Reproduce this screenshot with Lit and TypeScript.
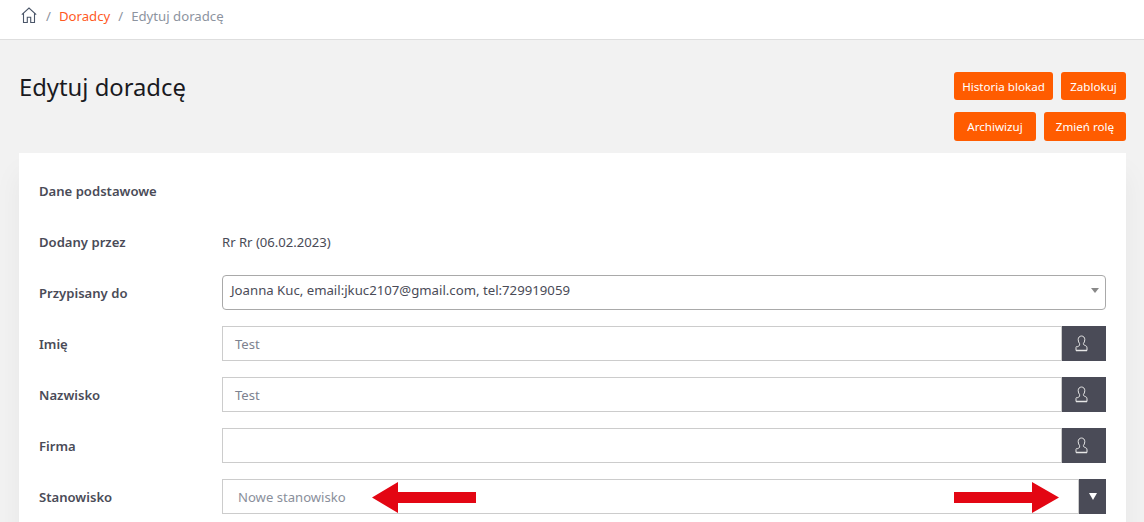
import { LitElement, html, css, svg } from "lit";
import { customElement } from "lit/decorators.js";

const person = svg`<svg class="person" width="13" height="17" viewBox="0 0 13 17" fill="none" stroke="currentColor" stroke-width="1"><path d="M6.500 1c-2 0-3.300 1.500-3.300 3.700 0 1.700.7 3 1.400 3.900v1.300c0 .6-.4 1-1.100 1.300l-1.300.6C1.300 11.200 1 11.800 1 12.800v2.700h11v-2.700c0-1-.3-1.600-1.200-2l-1.300-.6c-.7-.3-1.100-.7-1.100-1.300V8.600c.7-.9 1.400-2.200 1.400-3.900C9.800 2.500 8.500 1 6.500 1z"/><path d="M1 15.500h11" stroke-width="1.500"/></svg>`;

@customElement("app-root")
export class AppRoot extends LitElement {
  static styles = css`
    :host { display: block; height: 522px; overflow: hidden; background: #f2f2f2; font-family: "Noto Sans", "Open Sans", sans-serif; font-size: 13.1px; color: #4a4b57; }
    .crumbs { background: #fff; border-bottom: 1px solid #dedede; display: flex; align-items: center; padding: 0 21px 8px; height: 31px; font-size: 13.2px; color: #8d94a0; }
    .crumbs svg { display: block; color: #4a5568; }
    .sep { margin: 0 8px 0 9px; color: #8d94a0; }
    .crumbs .link { color: #ff5a1f; margin-right: -1px; }
    .head { display: flex; justify-content: space-between; padding: 32px 18px 12px 19px; }
    h1 { margin: 0; font-size: 23.8px; line-height: 30px; font-weight: 400; color: #1a1a1f; }
    .actions { display: flex; flex-direction: column; align-items: flex-end; gap: 12px; }
    .line { display: flex; gap: 8px; }
    .btn { background: #ff5c00; color: #fff; border-radius: 3px; height: 28px; display: flex; align-items: center; justify-content: center; font-size: 11.6px; box-sizing: border-box; }
    .line + .line .btn { height: 29px; }
    .card { position: relative; margin: 0 18px 0 19px; background: #fff; padding: 26px 20px 0; box-shadow: 0 20px 27px rgba(0,0,0,.05); height: 400px; box-sizing: border-box; }
    .row { display: flex; align-items: center; }
    .lab { width: 183px; flex: none; font-weight: 600; }
    .title { height: 24px; margin-bottom: 27px; }
    .info { height: 24px; margin-bottom: 21px; }
    .field { height: 35px; margin-bottom: 16px; }
    .control { flex: 1; height: 35px; box-sizing: border-box; border: 1px solid #ccc; display: flex; align-items: center; padding: 0 12px; color: #7d8290; }
    .select { border-color: #a9a9a9; border-radius: 4px; padding: 0 8px 6px; font-size: 13.2px; color: #4a4b57; justify-content: space-between; }
    .caret { width: 0; height: 0; border-left: 4px solid transparent; border-right: 4px solid transparent; border-top: 5px solid #888; margin: 2px -2px 0 0; }
    .addon { flex: none; width: 44px; height: 35px; box-sizing: border-box; padding-right: 6px; background: #4a4b57; color: #e6e6e6; display: flex; align-items: center; justify-content: center; }
    .combo { padding-left: 15px; color: #8a8f9b; }
    .drop { width: 27px; padding-right: 0; }
    .drop i { width: 0; height: 0; border-left: 4.5px solid transparent; border-right: 4.5px solid transparent; border-top: 7px solid #fff; }
    .arrow { position: absolute; top: 329px; display: block; }
    .a1 { left: 353px; }
    .a2 { left: 935px; }
  `;

  render() {
    return html`
      <nav class="crumbs">
        <svg width="16" height="17" viewBox="0 0 16 17" fill="none" stroke="currentColor" stroke-width="1.1"><path d="M.8 7.600 8 1l7.200 6.600M2.500 6.200V15.500h3.800v-5.300h3.400v5.300h3.800V6.200"/></svg>
        <span class="sep">/</span><span class="link">Doradcy</span><span class="sep">/</span><span>Edytuj doradcę</span>
      </nav>
      <div class="head">
        <h1>Edytuj doradcę</h1>
        <div class="actions">
          <div class="line">
            <div class="btn" style="width:99px">Historia blokad</div>
            <div class="btn" style="width:65px">Zablokuj</div>
          </div>
          <div class="line">
            <div class="btn" style="width:82px">Archiwizuj</div>
            <div class="btn" style="width:82px">Zmień rolę</div>
          </div>
        </div>
      </div>
      <section class="card">
        <div class="row title"><div class="lab">Dane podstawowe</div></div>
        <div class="row info"><div class="lab">Dodany przez</div><div>Rr Rr (06.02.2023)</div></div>
        <div class="row field"><div class="lab">Przypisany do</div>
          <div class="control select"><span>Joanna Kuc, email:jkuc2107@gmail.com, tel:729919059</span><span class="caret"></span></div></div>
        ${["Imię|Test", "Nazwisko|Test", "Firma|"].map((s) => { const [l, v] = s.split("|"); return html`
          <div class="row field"><div class="lab">${l}</div><div class="control">${v}</div><div class="addon">${person}</div></div>`; })}
        <div class="row field"><div class="lab">Stanowisko</div><div class="control combo">Nowe stanowisko</div><div class="addon drop"><i></i></div></div>
        <svg class="arrow a1" width="105" height="31" viewBox="0 0 105 31"><path fill="#e30613" d="M0 15.500 26 0V10h78v11H26v10z"/></svg>
        <svg class="arrow a2" width="105" height="31" viewBox="0 0 105 31"><path fill="#e30613" d="M105 15.500 78 0V10H0v11h78v10z"/></svg>
      </section>
    `;
  }
}
